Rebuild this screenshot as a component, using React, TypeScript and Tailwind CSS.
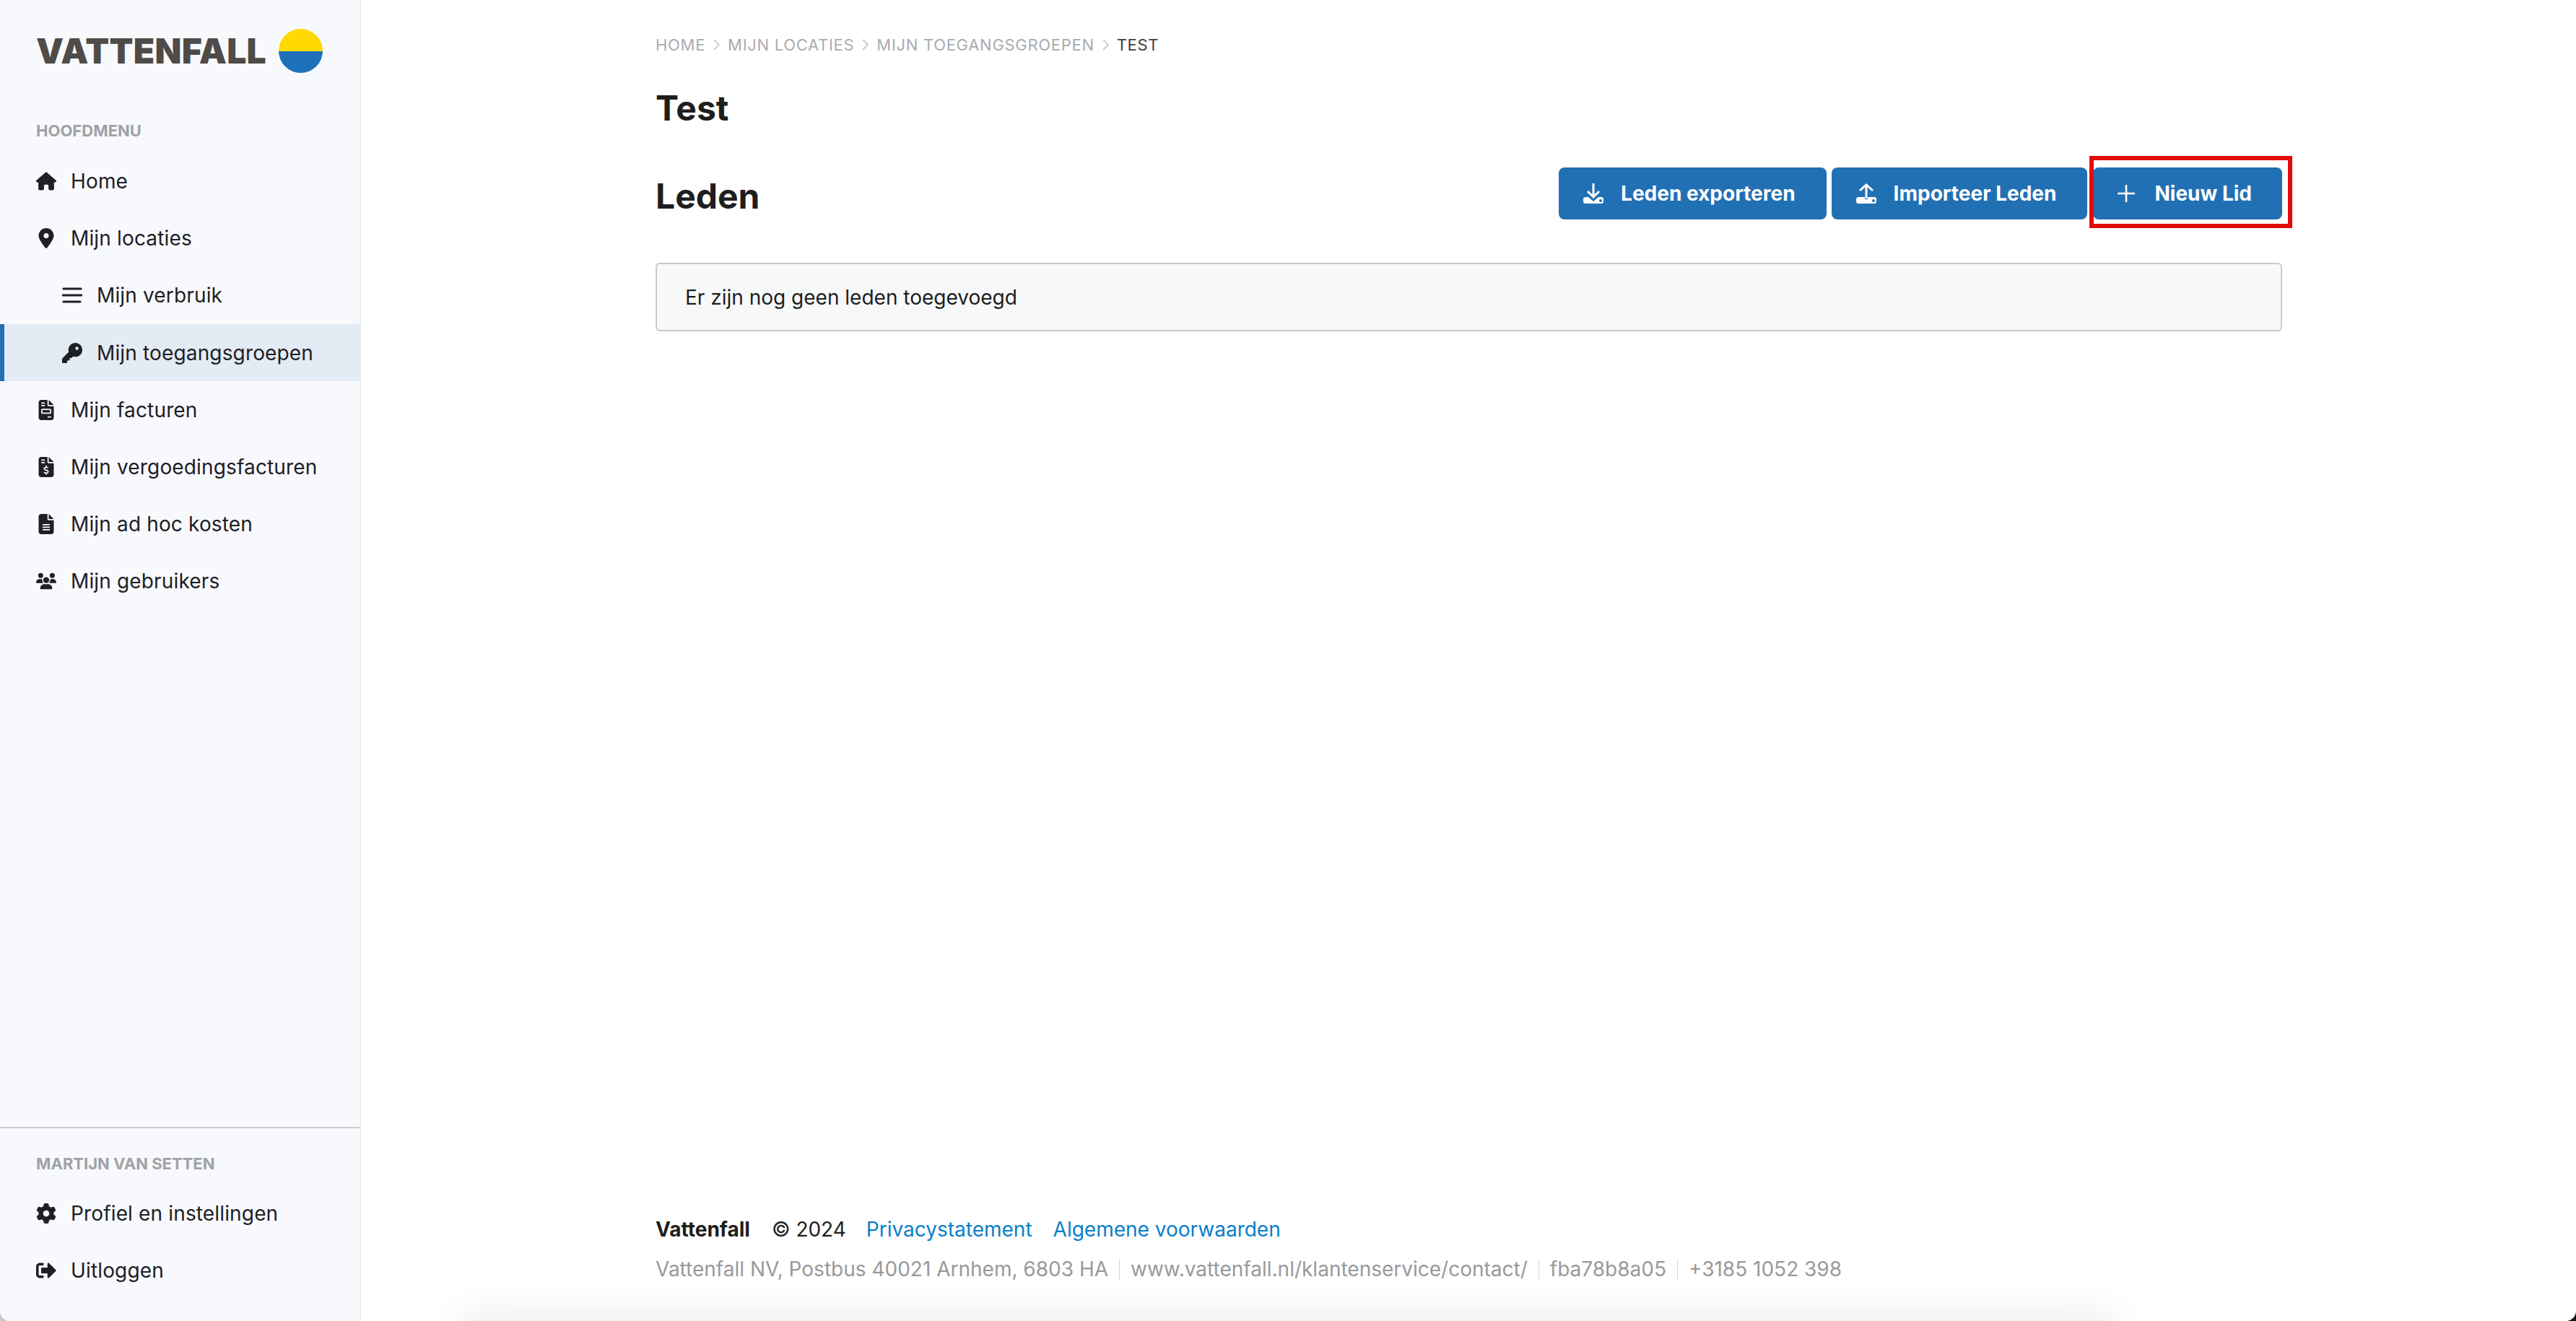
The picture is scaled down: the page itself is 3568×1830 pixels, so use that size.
import React from 'react';
import { FaHouse, FaLocationDot, FaKey, FaFileInvoice, FaFileInvoiceDollar, FaFileLines, FaUsers, FaGear } from 'react-icons/fa6';
import { FaSignOutAlt } from 'react-icons/fa';

const font = "font-['Inter','Liberation_Sans',sans-serif]";

const BarsIcon = () => (
  <svg width="28" height="28" viewBox="0 0 28 28" fill="none" stroke="currentColor" strokeWidth="3.2" strokeLinecap="round">
    <path d="M2 5h24M1 14h26M2 23h23" />
  </svg>
);

const DownloadIcon = () => (
  <svg width="28" height="28" viewBox="0 0 28 28" className="shrink-0">
    <path fill="#fff" d="M3 19h4l7 6 7-6h4a3 3 0 0 1 3 3v3a3 3 0 0 1-3 3H3a3 3 0 0 1-3-3v-3a3 3 0 0 1 3-3z" />
    <circle cx="24" cy="24" r="2" fill="#2270b4" />
    <path d="M14 0v18M6 11l8 8 8-8" fill="none" stroke="#fff" strokeWidth="3" />
  </svg>
);

const UploadIcon = () => (
  <svg width="28" height="28" viewBox="0 0 28 28" className="shrink-0">
    <path fill="#fff" d="M3 19h9v3h4v-3h9a3 3 0 0 1 3 3v3a3 3 0 0 1-3 3H3a3 3 0 0 1-3-3v-3a3 3 0 0 1 3-3z" />
    <circle cx="24" cy="24" r="2" fill="#2270b4" />
    <path d="M14 2v19M5 10l9-8 9 8" fill="none" stroke="#fff" strokeWidth="3" />
  </svg>
);

const PlusIcon = () => (
  <svg width="24" height="24" viewBox="0 0 24 24" className="shrink-0" stroke="#fff" strokeWidth="2.6" strokeLinecap="round">
    <path d="M12 1v22M1 12h22" />
  </svg>
);

const Chevron = () => (
  <svg width="9" height="16" viewBox="0 0 9 16" fill="none" stroke="#b5b5b8" strokeWidth="1.3">
    <path d="M1 1l7 7-7 7" />
  </svg>
);

const NavItem: React.FC<{ icon: React.ReactNode; label: string; sub?: boolean; active?: boolean }> = ({ icon, label, sub, active }) => (
  <div
    className={`h-[79.2px] flex items-center border-l-[6px] text-[28px] tracking-[0.15px] text-[#1e2024] ${sub ? 'pl-[80px]' : 'pl-[44px]'} ${
      active ? 'bg-[#e3ebf4] border-[#2270b4]' : 'border-transparent'
    }`}
  >
    <span className="w-[28px] h-[28px] flex items-center justify-center text-[#1e2024] shrink-0">{icon}</span>
    <span className="ml-[20px]">{label}</span>
  </div>
);

const ActionButton: React.FC<{ icon: React.ReactNode; label: string; className: string }> = ({ icon, label, className }) => (
  <button className={`h-[72px] bg-[#2270b4] rounded-[8px] flex items-center text-white text-[28px] font-bold ${className}`}>
    {icon}
    <span>{label}</span>
  </button>
);

export default function App() {
  return (
    <div className={`h-[1830px] w-full overflow-hidden bg-[linear-gradient(to_right,#c8c8c8,#0b1518)] ${font}`}>
      <div className="relative h-full w-full flex overflow-hidden bg-white rounded-b-[14px]">
        <aside className="w-[500px] shrink-0 h-full flex flex-col bg-[#f8f9fd] border-r-2 border-[#eceef2]">
          <div className="pt-[40px] pl-[50px] flex items-center h-[101px]">
            <span className="w-[328px] text-[48px] leading-[61px] font-black text-[#4e4b48] tracking-[0.3px]">VATTENFALL</span>
            <span className="ml-[8px] w-[61px] h-[61px] rounded-full overflow-hidden flex flex-col">
              <span className="h-1/2 bg-[#ffda00]" />
              <span className="h-1/2 bg-[#1e71b8]" />
            </span>
          </div>
          <div className="mt-[64px] mb-[14.5px] pl-[50px] h-[32px] leading-[32px] text-[22px] font-bold text-[#a0a2a6]">HOOFDMENU</div>
          <nav>
            <NavItem icon={<FaHouse size={28} />} label="Home" />
            <NavItem icon={<FaLocationDot size={28} />} label="Mijn locaties" />
            <NavItem icon={<BarsIcon />} label="Mijn verbruik" sub />
            <NavItem icon={<FaKey size={28} />} label="Mijn toegangsgroepen" sub active />
            <NavItem icon={<FaFileInvoice size={28} />} label="Mijn facturen" />
            <NavItem icon={<FaFileInvoiceDollar size={28} />} label="Mijn vergoedingsfacturen" />
            <NavItem icon={<FaFileLines size={28} />} label="Mijn ad hoc kosten" />
            <NavItem icon={<FaUsers size={28} />} label="Mijn gebruikers" />
          </nav>
          <div className="mt-auto border-t-2 border-[#cdced2] pt-[33px] pb-[30.4px]">
            <div className="mb-[13.4px] pl-[50px] h-[32px] leading-[32px] text-[22px] font-bold text-[#a0a2a6]">MARTIJN VAN SETTEN</div>
            <NavItem icon={<FaGear size={28} />} label="Profiel en instellingen" />
            <NavItem icon={<FaSignOutAlt size={28} />} label="Uitloggen" />
          </div>
        </aside>

        <main className="flex-1 h-full flex flex-col pl-px">
          <div className="w-[2253px] mx-auto h-full flex flex-col pt-[46px]">
            <div className="h-[32px] flex items-center gap-[11px] text-[22px] tracking-[0.7px] text-[#aaabb0]">
              <span>HOME</span>
              <Chevron />
              <span>MIJN LOCATIES</span>
              <Chevron />
              <span>MIJN TOEGANGSGROEPEN</span>
              <Chevron />
              <span className="text-[#3c3c40]">TEST</span>
            </div>
            <h1 className="mt-[42px] h-[60px] leading-[60px] text-[48px] font-bold text-[#1e1e1e]">Test</h1>
            <div className="mt-[52px] h-[72px] flex items-center justify-between">
              <h2 className="pt-[8px] text-[48px] font-bold text-[#1e1e1e]">Leden</h2>
              <div className="flex gap-[7px]">
                <ActionButton icon={<DownloadIcon />} label="Leden exporteren" className="pl-[34px] pr-[43px] gap-[24px]" />
                <ActionButton icon={<UploadIcon />} label="Importeer Leden" className="pl-[34px] pr-[43px] gap-[24px]" />
                <ActionButton icon={<PlusIcon />} label="Nieuw Lid" className="ml-[1px] pl-[34px] pr-[42px] gap-[27px]" />
              </div>
            </div>
            <div className="mt-[60px] h-[95px] flex items-center pl-[39px] bg-[#f7f8fa] border-2 border-[#c9c9cb] rounded-[6px] text-[28px] text-[#1e1e1e]">
              Er zijn nog geen leden toegevoegd
            </div>

            <footer className="mt-auto pb-[52px] text-[28px]">
              <div className="h-[40px] mb-[15px] flex items-center text-[#1e1e1e]">
                <span className="font-bold">Vattenfall</span>
                <span className="ml-[30px]">© 2024</span>
                <span className="ml-[28px] text-[#0a7fc9]">Privacystatement</span>
                <span className="ml-[29px] text-[#0a7fc9]">Algemene voorwaarden</span>
              </div>
              <div className="h-[40px] flex items-center text-[#999999]">
                <span>Vattenfall NV, Postbus 40021 Arnhem, 6803 HA</span>
                <span className="mx-[15px] w-px h-[29px] bg-[#d5d5d5]" />
                <span>www.vattenfall.nl/klantenservice/contact/</span>
                <span className="mx-[15px] w-px h-[29px] bg-[#d5d5d5]" />
                <span>fba78b8a05</span>
                <span className="mx-[15px] w-px h-[29px] bg-[#d5d5d5]" />
                <span>+3185 1052 398</span>
              </div>
            </footer>
          </div>
        </main>

        {/* annotation drawn over the screenshot */}
        <div className="absolute left-[2894px] top-[216px] w-[281px] h-[100px] border-[6px] border-[#e30b0b] pointer-events-none" />
        {/* window shadow coming up from below */}
        <div className="absolute left-[640px] right-[640px] top-full h-[40px] shadow-[0_0_60px_rgba(0,0,0,0.12)]" />
      </div>
    </div>
  );
}
